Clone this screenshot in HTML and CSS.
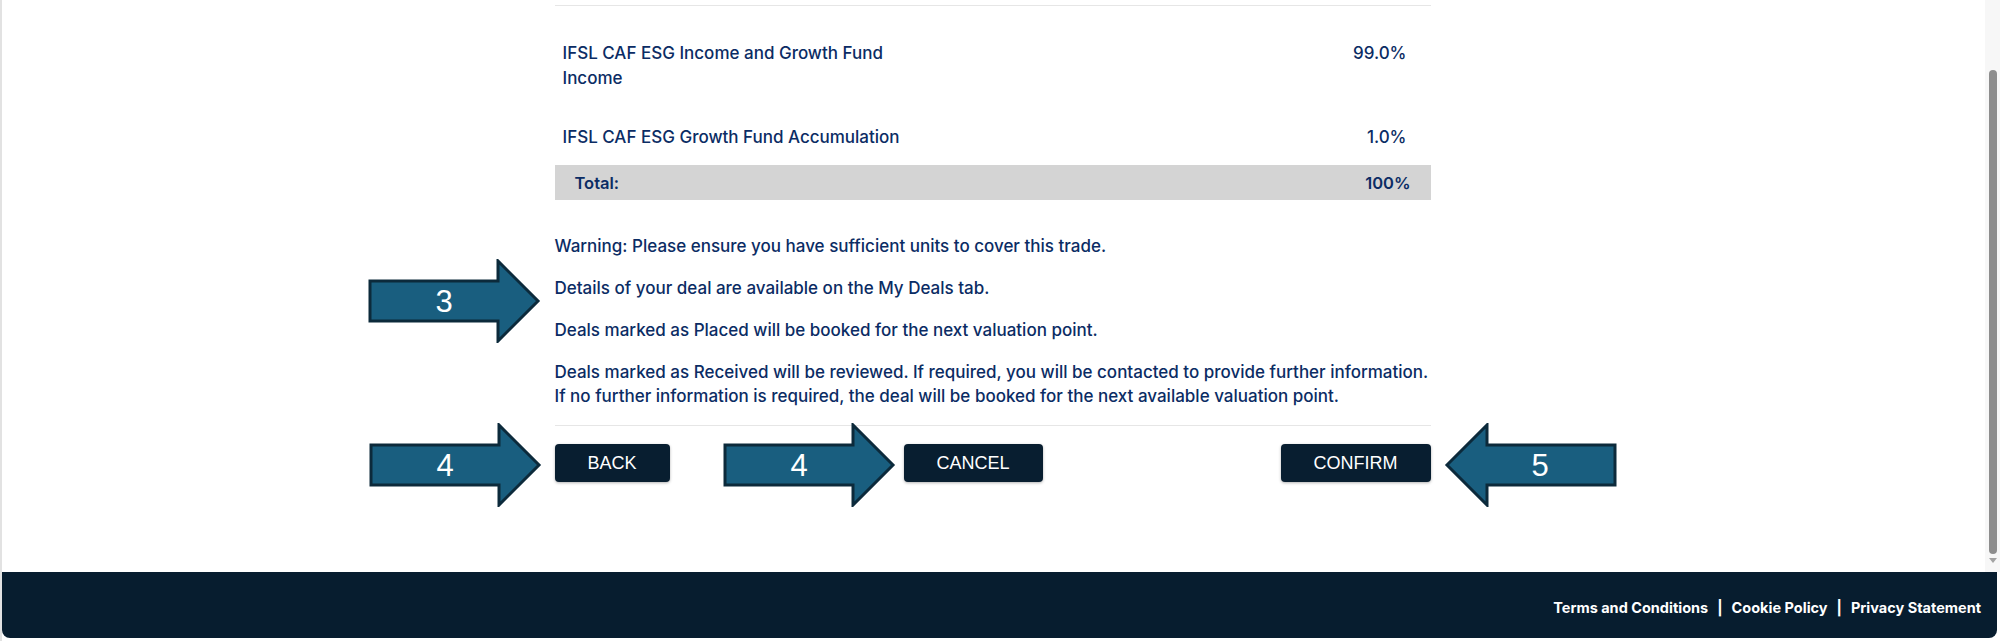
FILE: index.html
```html
<!DOCTYPE html>
<html lang="en">

<head>
    <title>Confirm Deal</title>
    <link rel="stylesheet" href="styles.css">
</head>

<body>
    <div class="window">
        <div class="viewport">
            <main class="content">
                <!-- Fund split -->
                <div class="funds">
                    <div class="fund-row">
                        <span class="fund-name">IFSL CAF ESG Income and Growth Fund Income</span>
                        <span class="fund-pct">99.0%</span>
                    </div>
                    <div class="fund-row second">
                        <span class="fund-name">IFSL CAF ESG Growth Fund Accumulation</span>
                        <span class="fund-pct">1.0%</span>
                    </div>
                    <div class="total-row">
                        <span>Total:</span>
                        <span>100%</span>
                    </div>
                </div>

                <!-- Notes -->
                <div class="notes">
                    <p>Warning: Please ensure you have sufficient units to cover this trade.</p>
                    <p>Details of your deal are available on the My Deals tab.</p>
                    <p>Deals marked as Placed will be booked for the next valuation point.</p>
                    <p>Deals marked as Received will be reviewed. If required, you will be contacted to provide further information.<br>If no further information is required, the deal will be booked for the next available valuation point.</p>
                </div>

                <!-- Actions -->
                <div class="actions">
                    <button class="btn btn-back">BACK</button>
                    <button class="btn btn-cancel">CANCEL</button>
                    <button class="btn btn-confirm">CONFIRM</button>
                </div>
            </main>

            <!-- Callout arrows -->
            <svg class="callout callout-3" width="174" height="84" viewBox="0 0 174 84">
                <polygon points="2,22 130,22 130,2 170,42 130,82 130,62 2,62" />
                <text x="76" y="53">3</text>
            </svg>
            <svg class="callout callout-4a" width="174" height="84" viewBox="0 0 174 84">
                <polygon points="2,22 130,22 130,2 170,42 130,82 130,62 2,62" />
                <text x="76" y="53">4</text>
            </svg>
            <svg class="callout callout-4b" width="174" height="84" viewBox="0 0 174 84">
                <polygon points="2,22 130,22 130,2 170,42 130,82 130,62 2,62" />
                <text x="76" y="53">4</text>
            </svg>
            <svg class="callout callout-5" width="174" height="84" viewBox="0 0 174 84">
                <polygon points="172,22 44,22 44,2 4,42 44,82 44,62 172,62" />
                <text x="97" y="53">5</text>
            </svg>

            <!-- Fake scrollbar -->
            <div class="scrollbar">
                <div class="thumb"></div>
                <div class="arrow-down"></div>
            </div>
        </div>

        <footer class="footer">
            <a href="#">Terms and Conditions</a>
            <span class="sep">|</span>
            <a href="#">Cookie Policy</a>
            <span class="sep">|</span>
            <a href="#">Privacy Statement</a>
        </footer>
    </div>
</body>

</html>
```

FILE: styles.css
```css
/* Reset */
* {
    margin: 0;
    padding: 0;
    box-sizing: border-box;
}

body {
    font-family: 'Inter', 'Liberation Sans', sans-serif;
    background-color: #f4f4f4;
    color: #0b2c64;
    overflow: hidden;
}

/* Outer frame */
.window {
    height: 641px;
    display: flex;
    flex-direction: column;
    background-color: #ffffff;
    border-left: 2px solid #e2e2e2;
}

.viewport {
    position: relative;
    height: 572px;
    padding-right: 15px;
}

.content {
    width: 876px;
    margin: 0 auto;
    padding-top: 5px;
    transform: translateX(-1px);
}

/* Fund split table */
.funds {
    border-top: 1px solid #e6e6e6;
}

.fund-row {
    display: flex;
    justify-content: space-between;
    align-items: flex-start;
    padding: 35px 24px 0 8px;
    font-size: 17px;
    font-weight: 500;
    line-height: 25px;
}

.fund-row.second {
    padding-top: 34px;
}

.fund-name {
    width: 360px;
}

.total-row {
    display: flex;
    justify-content: space-between;
    align-items: center;
    height: 35px;
    margin-top: 15px;
    padding: 0 20px;
    background-color: #d4d4d4;
    font-size: 16.5px;
    font-weight: 600;
}

/* Notes */
.notes {
    padding: 34px 0 17px;
    border-bottom: 1px solid #e6e6e6;
    font-size: 17px;
    font-weight: 500;
    line-height: 24px;
}

.notes p + p {
    margin-top: 18px;
}

/* Buttons */
.actions {
    display: flex;
    align-items: center;
    padding-top: 18px;
}

.btn {
    height: 38px;
    padding: 0 33px;
    background-color: #081e30;
    color: #ffffff;
    border: none;
    border-radius: 4px;
    box-shadow: 0 1px 3px rgba(0, 0, 0, 0.3);
    font-family: 'Liberation Sans', Arial, sans-serif;
    font-size: 18px;
    cursor: pointer;
}

.btn-cancel {
    margin-left: 234px;
}

.btn-confirm {
    margin-left: auto;
}

/* Callout arrows */
.callout {
    position: absolute;
}

.callout polygon {
    fill: #195e7f;
    stroke: #0c2a3b;
    stroke-width: 3;
    stroke-linejoin: miter;
}

.callout text {
    fill: #ffffff;
    font-family: 'Liberation Sans', Arial, sans-serif;
    font-size: 31px;
    text-anchor: middle;
}

.callout-3 {
    left: 366px;
    top: 259px;
}

.callout-4a {
    left: 367px;
    top: 423px;
}

.callout-4b {
    left: 721px;
    top: 423px;
}

.callout-5 {
    left: 1441px;
    top: 423px;
}

/* Scrollbar */
.scrollbar {
    position: absolute;
    top: 0;
    right: 0;
    width: 15px;
    height: 100%;
    background-color: #f7f7f7;
}

.thumb {
    position: absolute;
    top: 70px;
    left: 4px;
    width: 8px;
    height: 484px;
    background-color: #8d8d8d;
    border-radius: 4px;
}

.arrow-down {
    position: absolute;
    left: 4px;
    top: 558px;
    border-left: 4px solid transparent;
    border-right: 4px solid transparent;
    border-top: 5px solid #a3a3a3;
}

/* Footer */
.footer {
    height: 66px;
    margin-right: 3px;
    display: flex;
    align-items: center;
    justify-content: flex-end;
    gap: 9px;
    padding: 4px 16px 0 0;
    background-color: #071d2f;
    border-radius: 0 0 8px 8px;
    color: #ffffff;
    font-size: 14.5px;
    font-weight: 700;
}

.footer a {
    color: #ffffff;
    text-decoration: none;
}
```
